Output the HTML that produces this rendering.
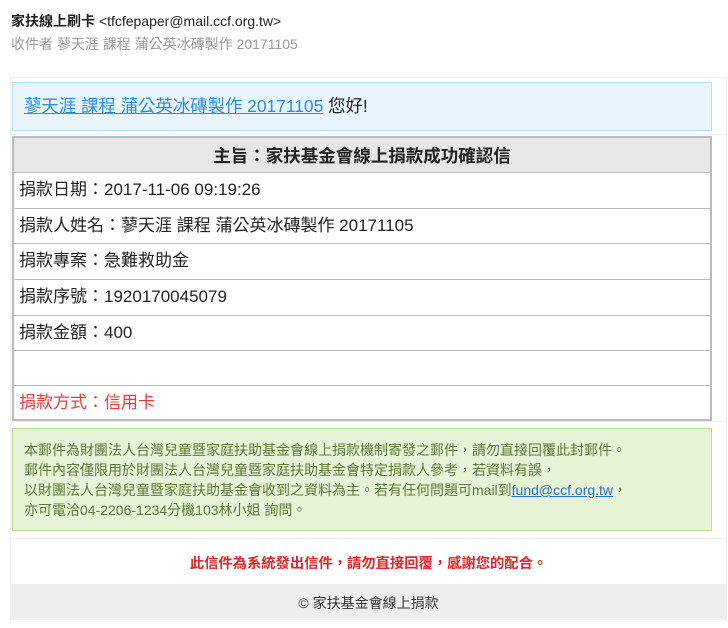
<!DOCTYPE html>
<html><head><meta charset="utf-8"><style>
*{margin:0;padding:0;box-sizing:border-box}
body{width:728px;height:628px;background:#fff;font-family:"Liberation Sans","Noto Sans CJK TC",sans-serif;position:relative;overflow:hidden;color:#222}
.a{position:absolute;white-space:nowrap}
.row{position:absolute;left:12px;width:700px;border-left:2px solid #bbb;border-right:2px solid #bbb;border-bottom:1px solid #bbb;font-size:17px;padding-left:5px;line-height:34px}
</style></head><body>
<div class="a" style="left:11px;top:11px;font-size:14px;color:#222"><b>家扶線上刷卡</b> &lt;tfcfepaper@mail.ccf.org.tw&gt;</div>
<div class="a" style="left:11px;top:34px;font-size:14px;color:#999">收件者 蓼天涯 課程 蒲公英冰磚製作 20171105</div>

<div class="a" style="left:10px;top:77px;width:717px;height:545px;border:1px solid #eee;border-bottom:none"></div>
<div class="a" style="left:10px;top:134px;width:717px;border-top:1px solid #eee"></div>
<div class="a" style="left:10px;top:421px;width:717px;border-top:1px solid #eee"></div>
<div class="a" style="left:10px;top:538px;width:717px;border-top:1px solid #eee"></div>

<div class="a" style="left:12px;top:82px;width:700px;height:49px;background:#e8f5fd;border:1px solid #b6e0f7;font-size:17.4px;line-height:47px;padding-left:11px"><span style="color:#2a8ee0;text-decoration:underline">蓼天涯 課程 蒲公英冰磚製作 20171105</span> 您好!</div>

<div class="row" style="top:136px;height:37px;background:#e6e6e6;border-top:2px solid #bbb;text-align:center;font-weight:bold;font-size:17.5px;line-height:36px;padding:0">主旨：家扶基金會線上捐款成功確認信</div>
<div class="row" style="top:173px;height:36px">捐款日期：2017-11-06 09:19:26</div>
<div class="row" style="top:209px;height:35px">捐款人姓名：蓼天涯 課程 蒲公英冰磚製作 20171105</div>
<div class="row" style="top:244px;height:36px">捐款專案：急難救助金</div>
<div class="row" style="top:280px;height:36px">捐款序號：1920170045079</div>
<div class="row" style="top:316px;height:35px">捐款金額：400</div>
<div class="row" style="top:351px;height:35px"></div>
<div class="row" style="top:386px;height:35px;color:#f0383c;border-bottom:2px solid #bbb">捐款方式：信用卡</div>

<div class="a" style="left:12px;top:428px;width:700px;height:103px;background:#e7f3d6;border:1px solid #b9dc8c;font-size:14px;color:#5d7a3a;line-height:20px;padding:11px 0 0 11px">本郵件為財團法人台灣兒童暨家庭扶助基金會線上捐款機制寄發之郵件，請勿直接回覆此封郵件。<br>郵件內容僅限用於財團法人台灣兒童暨家庭扶助基金會特定捐款人參考，若資料有誤，<br>以財團法人台灣兒童暨家庭扶助基金會收到之資料為主。若有任何問題可mail到<span style="color:#2a6fd0;text-decoration:underline">fund@ccf.org.tw</span>，<br>亦可電洽04-2206-1234分機103林小姐 詢問。</div>

<div class="a" style="left:10px;top:552px;width:717px;text-align:center;font-size:14.3px;font-weight:bold;color:#e0262a">此信件為系統發出信件，請勿直接回覆，感謝您的配合。</div>
<div class="a" style="left:10px;top:584px;width:717px;height:36px;background:#eee;text-align:center;font-size:14px;line-height:38px;color:#333">© 家扶基金會線上捐款</div>
</body></html>
